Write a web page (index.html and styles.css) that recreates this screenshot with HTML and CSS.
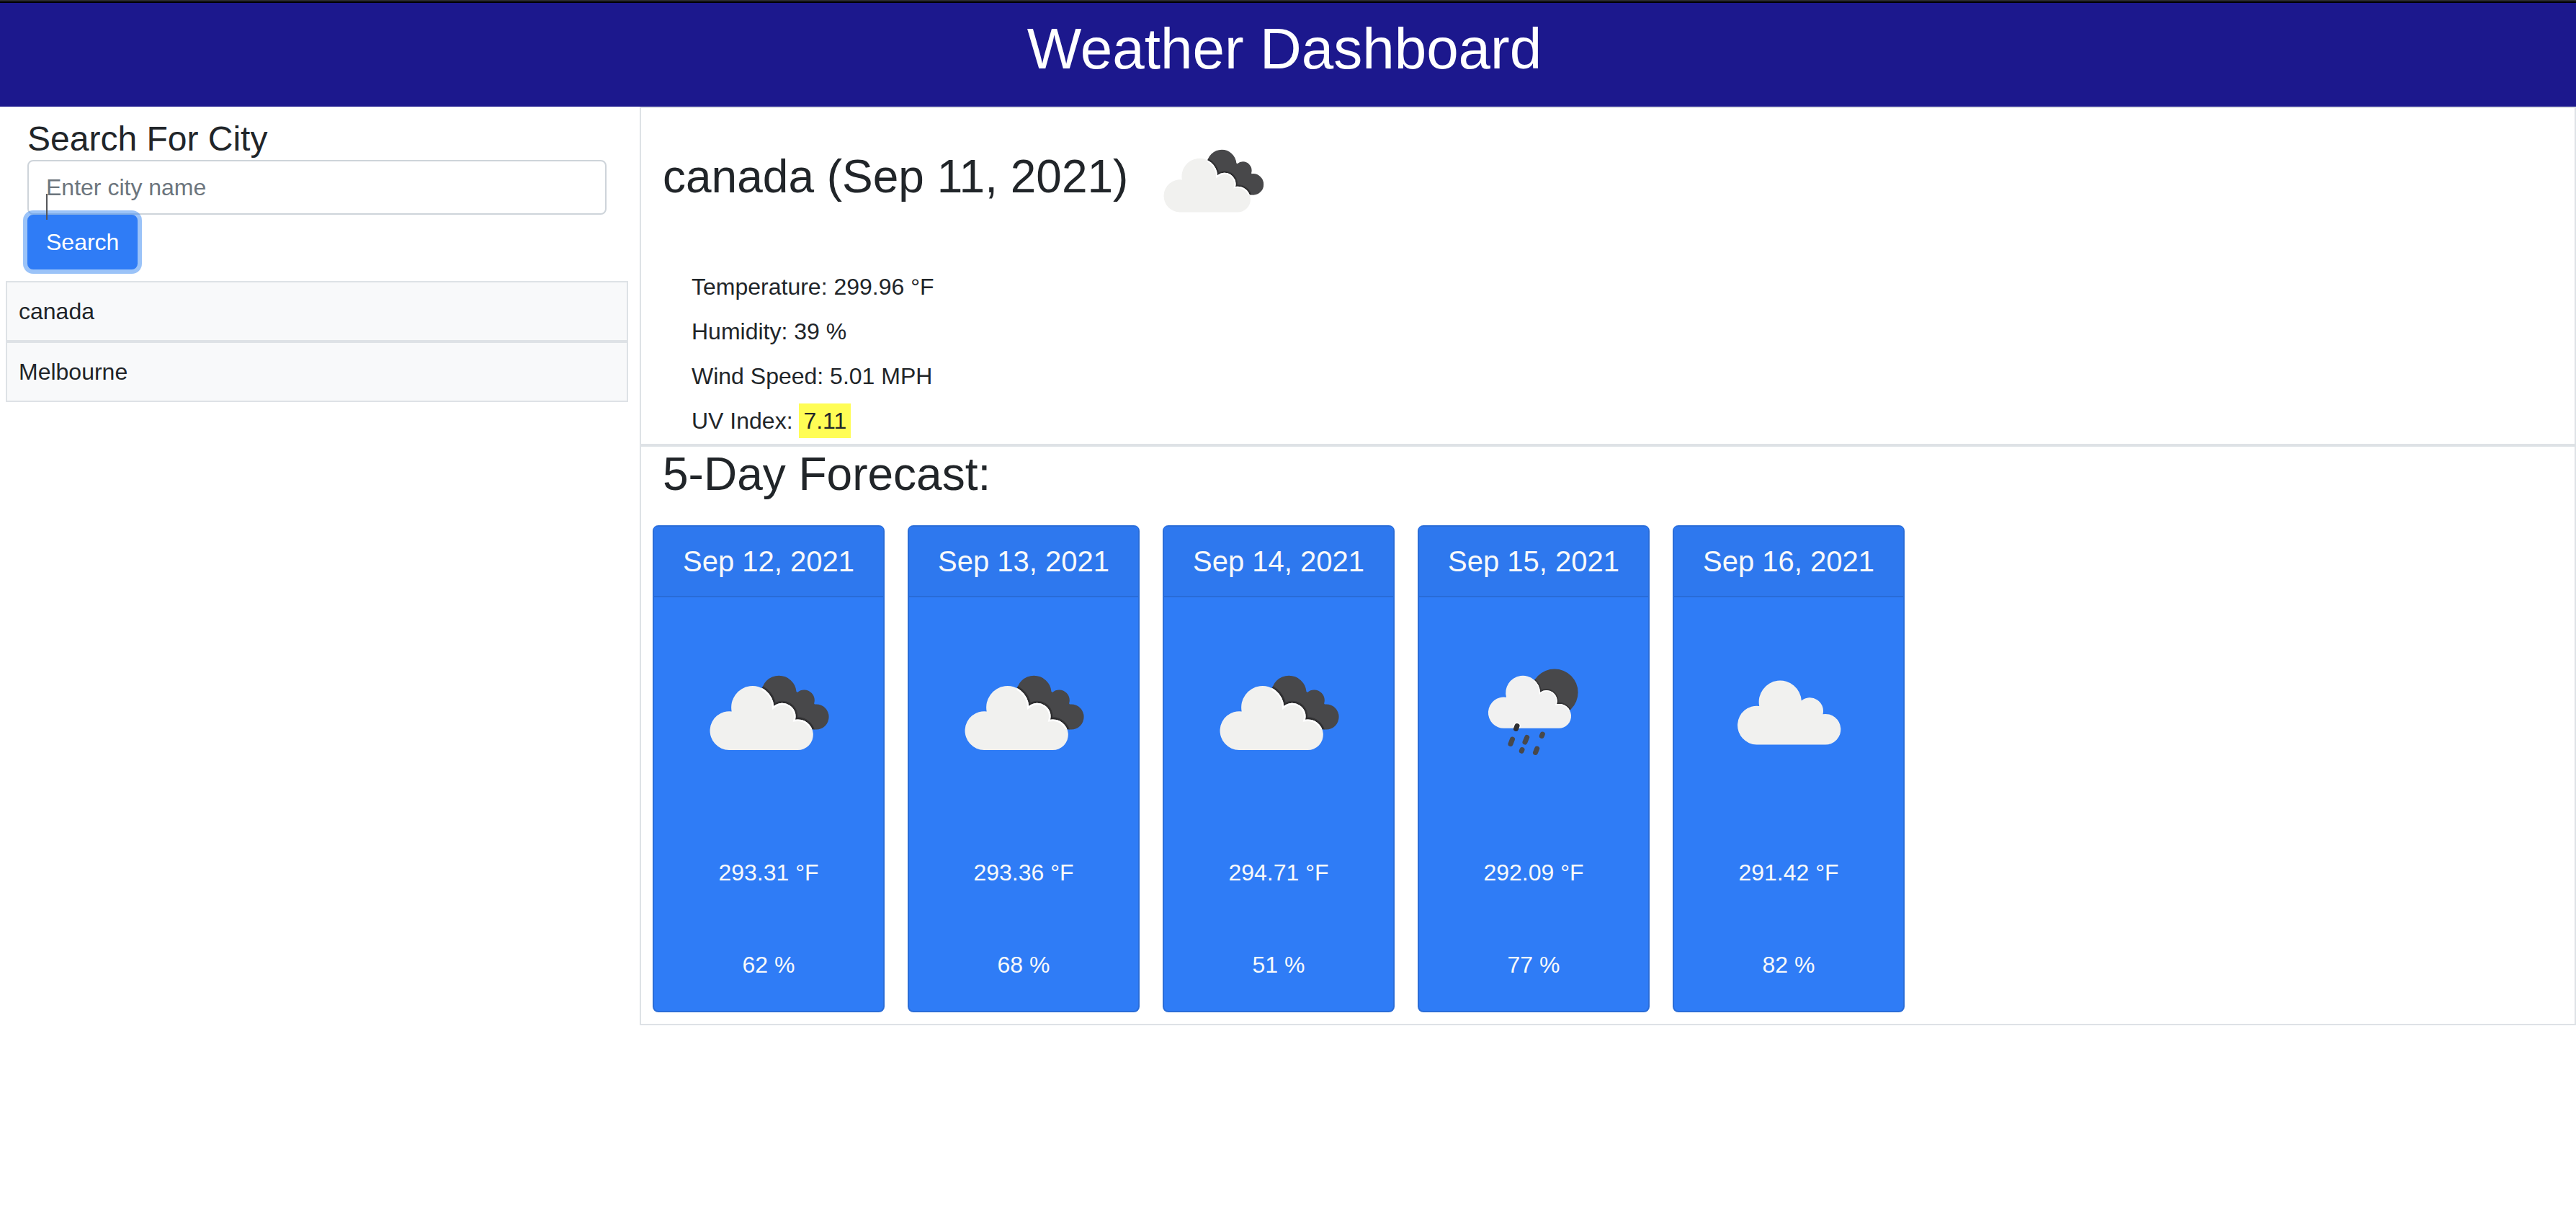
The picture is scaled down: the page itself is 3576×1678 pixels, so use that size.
FILE: index.html
```html
<!DOCTYPE html>
<html lang="en">
<head>
<meta charset="utf-8">
<title>Weather Dashboard</title>
<link rel="stylesheet" href="styles.css">
</head>
<body>
<svg class="sprite" aria-hidden="true">
  <defs>
    <path id="cloud" d="M64 172A26.9 26.9 0 1 1 67.7 118.4A29.6 29.6 0 1 1 126.3 111A18.5 18.5 0 0 1 156 129.7A21.3 21.3 0 1 1 159 172Z"/>
    <path id="small-cloud" d="M78.3 141.7A21.6 21.6 0 1 1 81 98.8A23.9 23.9 0 1 1 128 92A14.8 14.8 0 0 1 151 108.2A16.9 16.9 0 1 1 153.7 141.7Z"/>
    <clipPath id="back-clip">
      <circle cx="133.3" cy="93" r="24.3"/><circle cx="168.3" cy="103" r="14.5"/><circle cx="185" cy="126" r="17.6"/>
      <path d="M115 110L133 93L157.700 91L182.700 108L185 143.6L150 140Z"/>
    </clipPath>
    <clipPath id="moon-clip"><circle cx="148" cy="92" r="32.6"/></clipPath>
    <clipPath id="cloud-clip"><use href="#cloud"/></clipPath>
    <clipPath id="small-cloud-clip"><use href="#small-cloud"/></clipPath>
    <symbol id="broken-clouds" viewBox="0 0 238 238">
      <g clip-path="url(#back-clip)">
        <path fill="#48484a" d="M0 0H238V238H0Z"/>
        <use href="#cloud" fill="none" stroke="#353537" stroke-width="6"/>
        <use href="#cloud" fill="none" stroke="#29292b" stroke-width="3"/>
      </g>
      <use href="#cloud" fill="#f1f1ef"/>
      <g clip-path="url(#cloud-clip)"><g clip-path="url(#back-clip)"><use href="#cloud" fill="none" stroke="#fff" stroke-width="5"/></g></g>
    </symbol>
    <symbol id="rain" viewBox="0 0 238 238">
      <g clip-path="url(#moon-clip)">
        <path fill="#48484a" d="M0 0H238V238H0Z"/>
        <use href="#small-cloud" fill="none" stroke="#353537" stroke-width="4"/>
      </g>
      <use href="#small-cloud" fill="#f1f1f1"/>
      <g clip-path="url(#small-cloud-clip)"><g clip-path="url(#moon-clip)"><use href="#small-cloud" fill="none" stroke="#fff" stroke-width="3"/></g></g>
      <path stroke="#fff" stroke-width="10" stroke-linecap="round" d="M96 138.500L95.500 139.500" clip-path="url(#small-cloud-clip)"/>
      <g stroke="#48484a" stroke-width="7" stroke-linecap="round">
        <path stroke="#303032" d="M96 138.500L94.500 142.500"/>
        <path d="M89.500 157L87 163.500M109.700 154.500L107 161M131.300 150L130.300 152.500M103 171.500L102.300 173.300M123.700 170L121.500 175.500"/>
      </g>
    </symbol>
    <symbol id="overcast" viewBox="0 0 238 238">
      <use href="#cloud" x="10.500" y="-7.500" fill="#f1f1ef"/>
    </symbol>
  </defs>
</svg>

<header class="banner"><h1>Weather Dashboard</h1></header>

<div class="layout">
  <aside class="sidebar">
    <form class="search">
      <label for="city">Search For City</label>
      <input id="city" type="text" placeholder="Enter city name">
      <button type="button">Search</button>
      <span class="caret"></span>
    </form>
    <ul class="history">
      <li>canada</li>
      <li>Melbourne</li>
    </ul>
  </aside>

  <main class="content">
    <section class="panel current">
      <h2>canada (Sep 11, 2021) <svg class="current-icon" role="img" aria-label="Broken clouds"><use href="#broken-clouds"/></svg></h2>
      <ul class="readings">
        <li>Temperature: 299.96 °F</li>
        <li>Humidity: 39 %</li>
        <li>Wind Speed: 5.01 MPH</li>
        <li>UV Index: <span class="uv">7.11</span></li>
      </ul>
    </section>

    <section class="panel forecast">
      <h2>5-Day Forecast:</h2>
      <div class="days">
        <article class="day">
          <h3>Sep 12, 2021</h3>
          <svg role="img" aria-label="Broken clouds" viewBox="0 0 238 238"><use href="#broken-clouds"/></svg>
          <p>293.31 °F</p>
          <p>62 %</p>
        </article>
        <article class="day">
          <h3>Sep 13, 2021</h3>
          <svg role="img" aria-label="Broken clouds" viewBox="0 0 238 238"><use href="#broken-clouds"/></svg>
          <p>293.36 °F</p>
          <p>68 %</p>
        </article>
        <article class="day">
          <h3>Sep 14, 2021</h3>
          <svg role="img" aria-label="Broken clouds" viewBox="0 0 238 238"><use href="#broken-clouds"/></svg>
          <p>294.71 °F</p>
          <p>51 %</p>
        </article>
        <article class="day">
          <h3>Sep 15, 2021</h3>
          <svg role="img" aria-label="Rain" viewBox="0 0 238 238"><use href="#rain"/></svg>
          <p>292.09 °F</p>
          <p>77 %</p>
        </article>
        <article class="day">
          <h3>Sep 16, 2021</h3>
          <svg role="img" aria-label="Overcast" viewBox="0 0 238 238"><use href="#overcast"/></svg>
          <p>291.42 °F</p>
          <p>82 %</p>
        </article>
      </div>
    </section>
  </main>
</div>
</body>
</html>
```
FILE: styles.css
```css
* {
  box-sizing: border-box;
}

body {
  margin: 0;
  border-top: 2px solid #2a2a2e;
  background: #fff;
  color: #212529;
  font: 32px/48px "Liberation Sans", Arial, sans-serif;
}

h1, h2, h3, p, ul {
  margin: 0;
  padding: 0;
  font-weight: 400;
}

ul {
  list-style: none;
}

.sprite {
  position: absolute;
  width: 0;
  height: 0;
}

/* Header */
.banner {
  padding: 16px 10px 32px 0;
  border-top: 2px solid #000;
  background: #1c188d;
  color: #fff;
  text-align: center;
}

.banner h1 {
  font-size: 80px;
  line-height: 96px;
}

.layout {
  display: grid;
  grid-template-columns: calc(25% - 6px) minmax(0, 1fr);
  align-items: start;
}

/* Sidebar */
.sidebar {
  padding: 16px 16px 0 8px;
}

.search {
  position: relative;
  display: flex;
  flex-direction: column;
  align-items: flex-start;
  padding: 0 30px;
  margin-bottom: 16px;
}

.search label {
  font-size: 48px;
  line-height: 58px;
}

.search input {
  width: 100%;
  height: 76px;
  padding: 12px 24px;
  border: 2px solid #ced4da;
  border-radius: 8px;
  background: #fff;
  color: #495057;
  font: inherit;
}

.search input::placeholder {
  color: #6c757d;
  opacity: 1;
}

.search button {
  height: 76px;
  padding: 12px 24px;
  border: 2px solid #2f7cf6;
  border-radius: 8px;
  background: #2f7cf6;
  box-shadow: 0 0 0 6px rgba(56, 136, 242, 0.5);
  color: #fff;
  font: inherit;
}

.caret {
  position: absolute;
  left: 56px;
  top: 105px;
  width: 2px;
  height: 36px;
  background: #55565a;
}

.history li {
  padding: 16px;
  border: 2px solid #dee2e6;
  background: #f8f9fa;
}

/* Panels */
.panel {
  border: 2px solid #dee2e6;
}

.panel h2 {
  padding: 0 30px;
  font-size: 64px;
  line-height: 77px;
}

.current {
  padding-bottom: 8px;
}

.current-icon {
  width: 200px;
  height: 200px;
  vertical-align: middle;
}

.readings {
  display: grid;
  gap: 14px;
  padding: 24px 70px 0;
}

.uv {
  display: inline-block;
  padding: 0 6px;
  background: #fffd55;
}

/* Forecast cards */
.days {
  display: flex;
  gap: 32px;
  padding: 32px 16px 16px;
}

.day {
  width: 322px;
  border: 2px solid #2a6dd8;
  border-radius: 8px;
  background: #2f7cf6;
  color: #f8f9fa;
  text-align: center;
}

.day h3 {
  padding: 24px 0;
  border-bottom: 2px solid #296cd7;
  background: #2e78ee;
  font-size: 40px;
  line-height: 48px;
}

.day svg {
  display: block;
  width: 100%;
  padding: 40px;
}

.day p {
  padding: 40px 0;
}
```
